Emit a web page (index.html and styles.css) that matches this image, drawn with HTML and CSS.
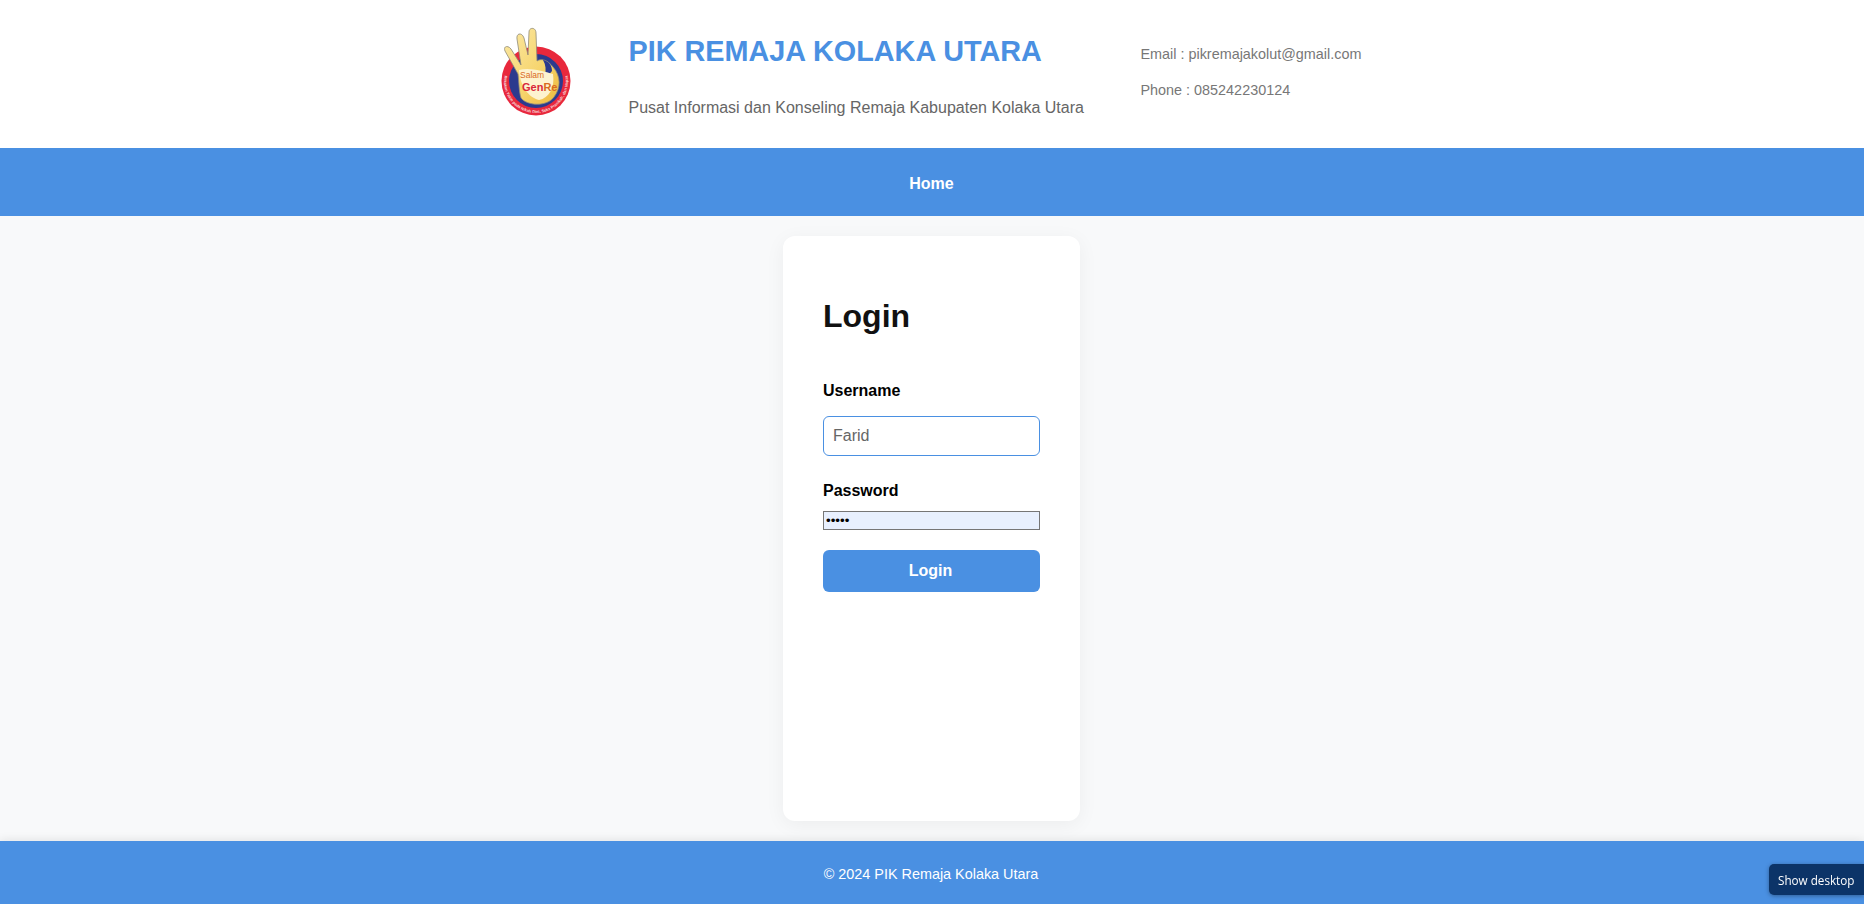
FILE: index.html
```html
<!DOCTYPE html>
<html lang="id">
<head>
<meta charset="utf-8">
<title>PIK Remaja Kolaka Utara</title>
<link rel="stylesheet" href="styles.css">
</head>
<body>
<div class="page">
  <header class="site-header">
    <svg class="logo" viewBox="0 0 90 100" width="90" height="100" role="img" aria-label="Salam GenRe">
      <defs>
        <path id="ring" d="M 13.5 51.5 A 32 32 0 1 0 67.6 34.4"/>
        <linearGradient id="hand" x1="0" y1="0" x2="1" y2="1">
          <stop offset="0" stop-color="#fbe9a6"/>
          <stop offset="0.6" stop-color="#f6d46c"/>
          <stop offset="1" stop-color="#eeb83c"/>
        </linearGradient>
      </defs>
      <circle cx="45" cy="57" r="34.5" fill="#e8283c"/>
      <circle cx="45" cy="57" r="27" fill="#2b3a8e"/>
      <path d="M30 74 C36 82 56 83 63 73 C70 64 70 52 62 43 C57 36 50 34 46 37 L45 9 C45 3 38 3 38 8 L37 31 L33 14 C31 8 25 9 26 15 L30 41 L20 25 C17 21 12 22 14 27 L27 50 C28 58 28 68 30 74 Z" fill="url(#hand)" stroke="#8f8a78" stroke-width="0.8"/>
      <path d="M52 36 C58 37 61 42 61 47 C59 50 56 51 54 51 C55 46 55 41 52 36 Z" fill="#2b3a8e"/>
      <path d="M28 46 C38 43 52 47 62 50 C64 64 58 74 48 76 C38 74 29 62 28 46 Z" fill="#fdf3cf"/>
      <text class="logo-salam" x="29" y="54">Salam</text>
      <text class="logo-genre" x="31" y="67"><tspan class="logo-gen">Gen</tspan><tspan class="logo-re">Re</tspan></text>
      <text class="logo-ring"><textPath href="#ring">Rekakan Yakin pada Nikah Dini, Seks Pranikah, dan Napza</textPath></text>
    </svg>
    <div class="brand">
      <h1 class="brand-title">PIK REMAJA KOLAKA UTARA</h1>
      <p class="brand-sub">Pusat Informasi dan Konseling Remaja Kabupaten Kolaka Utara</p>
    </div>
    <div class="contact">
      <p class="contact-line">Email : pikremajakolut@gmail.com</p>
      <p class="contact-line">Phone : 085242230124</p>
    </div>
  </header>
  <nav class="site-nav"><a class="nav-link" href="#">Home</a></nav>
  <main class="site-main">
    <form class="card">
      <h2 class="card-title">Login</h2>
      <label class="field-label" for="username">Username</label>
      <input class="field-input" id="username" type="text" value="Farid">
      <label class="field-label field-label-tight" for="password">Password</label>
      <input class="field-password" id="password" type="password" value="Farid">
      <button class="submit" type="button">Login</button>
    </form>
  </main>
  <footer class="site-footer">© 2024 PIK Remaja Kolaka Utara</footer>
</div>
<div class="show-desktop">Show desktop</div>
</body>
</html>
```
FILE: styles.css
```css
* { box-sizing: border-box; }
html, body { margin: 0; height: 100%; }
body {
  font-family: "Liberation Sans", Arial, sans-serif;
  background: #f8f9fa;
  color: #000;
  overflow: hidden;
}
.page { display: flex; flex-direction: column; height: 904px; }
.site-header {
  height: 148px;
  flex: none;
  background: #fff;
  display: flex;
  justify-content: center;
  align-items: flex-start;
  padding-right: 8px;
}
.logo { margin: 24px 48px 0 -3px; flex: none; }
.brand { width: 512px; flex: none; padding-top: 35px; }
.brand-title { margin: 0; font-size: 28.8px; line-height: 33px; font-weight: 700; color: #4a90e2; }
.brand-sub { margin: 0; padding-top: 31px; font-size: 16px; line-height: 18px; color: #666; }
.contact { width: 222px; flex: none; padding-top: 46px; }
.contact-line { margin: 0 0 20px; font-size: 14.4px; line-height: 16px; color: #777; }
.logo-salam { font: 400 8.5px "Liberation Sans", sans-serif; fill: #d96a1e; }
.logo-genre { font: 700 11px "Liberation Sans", sans-serif; }
.logo-gen { fill: #d9283a; }
.logo-re { fill: #d96a1e; }
.logo-ring { font: 700 4px "Liberation Sans", sans-serif; fill: #f7dcdc; }
.site-nav {
  height: 68px;
  flex: none;
  background: #4a90e2;
  display: flex;
  align-items: center;
  justify-content: center;
  padding: 4px 1px 0 0;
}
.nav-link { color: #fff; font-size: 16px; font-weight: 700; text-decoration: none; }
.site-main {
  flex: 1;
  display: flex;
  justify-content: center;
  padding: 20px 1px 20px 0;
  min-height: 0;
}
.card {
  width: 297px;
  background: #fff;
  border-radius: 12px;
  padding: 40px;
  box-shadow: 0 4px 20px rgba(0, 0, 0, 0.05);
  display: flex;
  flex-direction: column;
  align-items: stretch;
}
.card-title { margin: 22px 0 47px; font-size: 32px; line-height: 37px; font-weight: 700; color: #111; }
.field-label { display: block; font-size: 16px; line-height: 18px; font-weight: 700; color: #000; margin-bottom: 16px; }
.field-label-tight { margin-bottom: 11px; }
.field-input {
  display: block;
  width: 100%;
  height: 40px;
  padding: 0 9px;
  border: 1px solid #4a90e2;
  border-radius: 6px;
  background: #fff;
  color: #666;
  font: 16px "Liberation Sans", Arial, sans-serif;
  margin-bottom: 26px;
  outline: none;
}
.field-password {
  display: block;
  width: 100%;
  height: 19px;
  padding: 1px 2px;
  border: 1px solid #767676;
  background: #e8f0fe;
  color: #000;
  font: 13.33px "Liberation Sans", Arial, sans-serif;
  margin-bottom: 20px;
  outline: none;
}
.submit {
  display: block;
  width: 100%;
  height: 42px;
  padding: 0 2px 0 0;
  border: 0;
  border-radius: 6px;
  background: #4a90e2;
  color: #fff;
  font: 700 16px "Liberation Sans", Arial, sans-serif;
}
.site-footer {
  height: 63px;
  flex: none;
  background: #4a90e2;
  color: #fff;
  font-size: 14.4px;
  display: flex;
  align-items: center;
  justify-content: center;
  padding: 2px 2px 0 0;
  box-shadow: 0 -2px 8px rgba(0, 0, 0, 0.08);
}
.show-desktop {
  position: fixed;
  right: 0;
  bottom: 9px;
  width: 95px;
  height: 31px;
  display: flex;
  align-items: center;
  padding-left: 9px;
  background: #0c3468;
  color: #fff;
  font: 11.7px "Open Sans", sans-serif;
  white-space: nowrap;
  border-radius: 5px 0 0 5px;
  box-shadow: 0 1px 4px rgba(0, 0, 0, 0.35);
}
```
